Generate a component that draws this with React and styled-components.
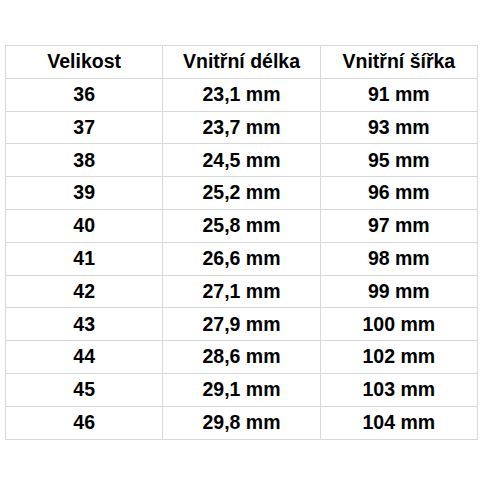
import React from 'react'
import styled, { createGlobalStyle } from 'styled-components'

const GlobalStyle = createGlobalStyle`
    html, body {
        margin: 0;
        padding: 0;
        background: #ffffff;
    }
`

const Page = styled.div`
    width: 487px;
    height: 487px;
    padding: 45px 0 0 5px;
    box-sizing: border-box;
    background: #fff;
`

const SizeTable = styled.table`
    width: 473px;
    border-collapse: collapse;
    table-layout: fixed;
    font-family: "Liberation Sans", Arial, sans-serif;
    font-weight: bold;
    font-size: 19.5px;
    color: #000;
`

const Cell = styled.td`
    height: 31.8px;
    padding: 0;
    border: 1px solid #d8d8d8;
    text-align: center;
    vertical-align: middle;
    line-height: 1;
`

const HeadCell = styled(Cell).attrs({ as: 'th' })`
    font-weight: bold;
`

const sizes = [
    ['36', '23,1 mm', '91 mm'],
    ['37', '23,7 mm', '93 mm'],
    ['38', '24,5 mm', '95 mm'],
    ['39', '25,2 mm', '96 mm'],
    ['40', '25,8 mm', '97 mm'],
    ['41', '26,6 mm', '98 mm'],
    ['42', '27,1 mm', '99 mm'],
    ['43', '27,9 mm', '100 mm'],
    ['44', '28,6 mm', '102 mm'],
    ['45', '29,1 mm', '103 mm'],
    ['46', '29,8 mm', '104 mm'],
]

const App = () => (
    <Page>
        <GlobalStyle />
        <SizeTable>
            <thead>
                <tr>
                    <HeadCell>Velikost</HeadCell>
                    <HeadCell>Vnitřní délka</HeadCell>
                    <HeadCell>Vnitřní šířka</HeadCell>
                </tr>
            </thead>
            <tbody>
                {
                    sizes.map(row => (
                        <tr key={ row[0] }>
                            { row.map(value => <Cell key={ value }>{ value }</Cell>) }
                        </tr>
                    ))
                }
            </tbody>
        </SizeTable>
    </Page>
)

export default App
